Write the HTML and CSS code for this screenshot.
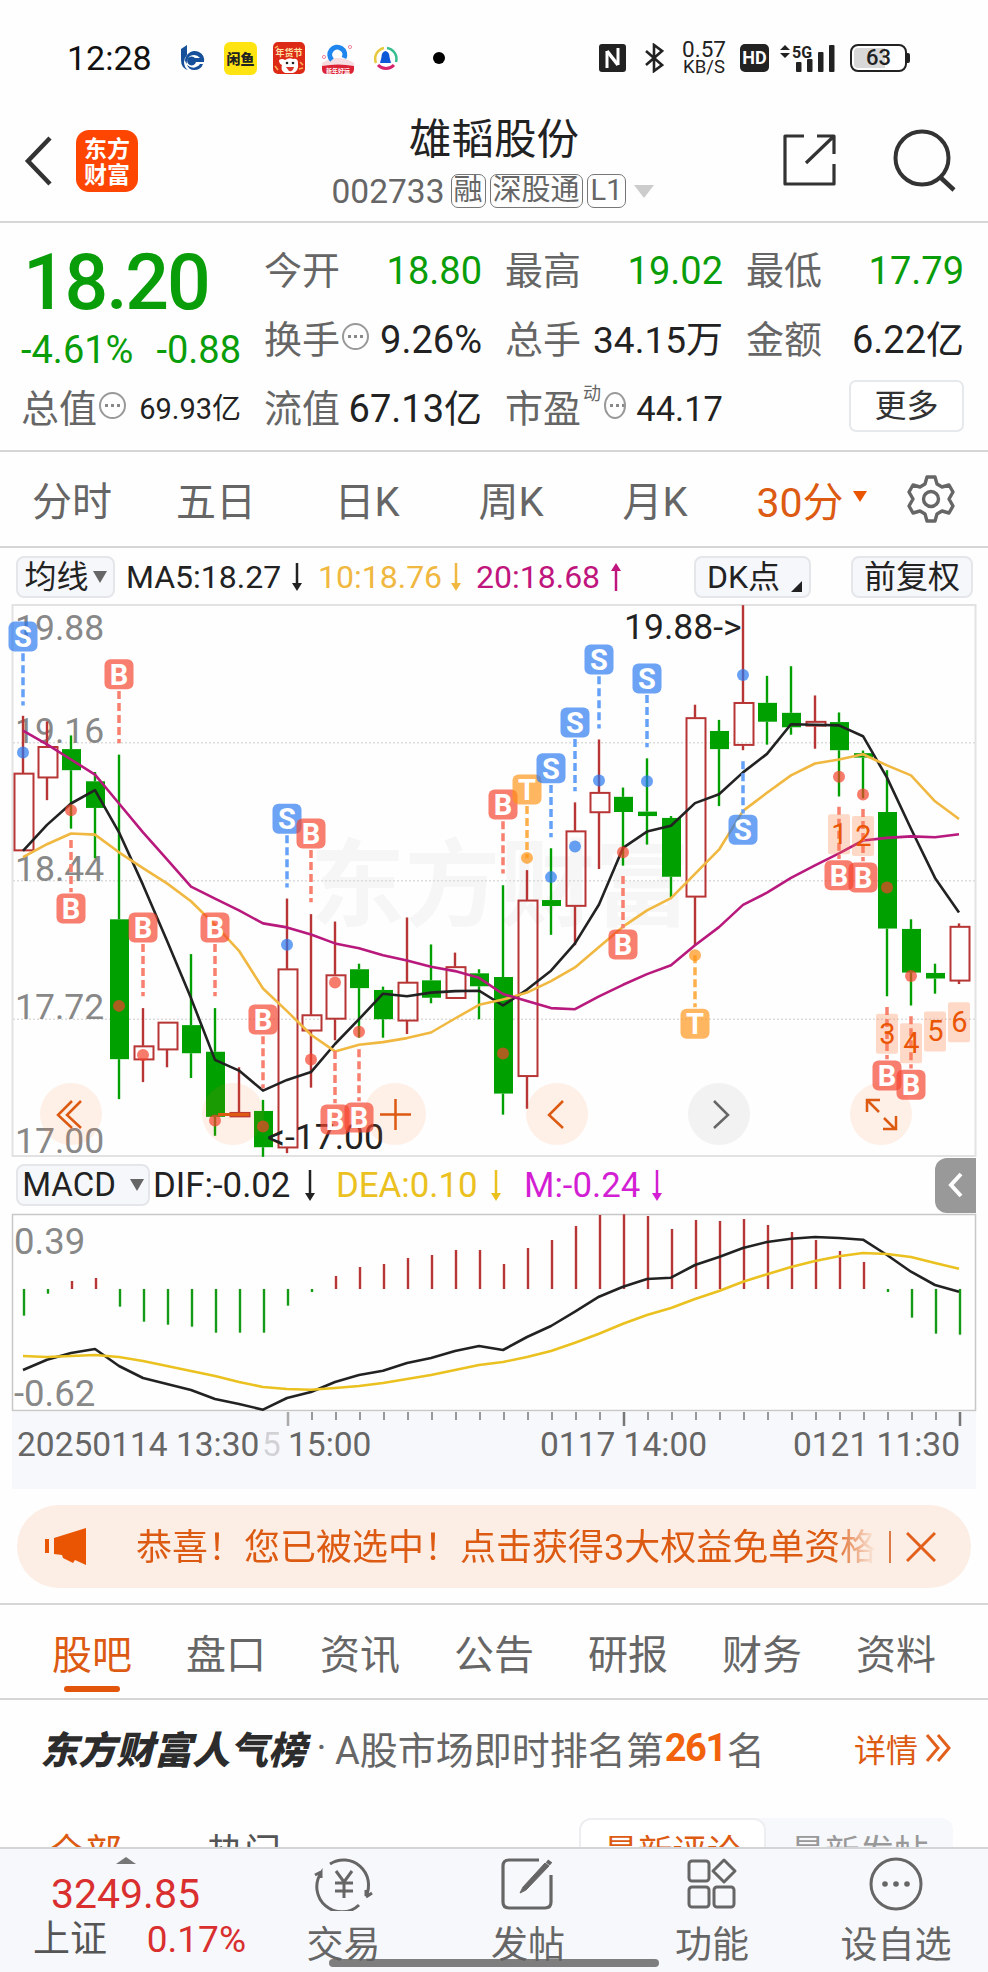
FILE: index.html
```html
<!DOCTYPE html>
<html lang="zh-CN">
<head>
  <meta charset="UTF-8">
  <meta name="viewport" content="width=device-width, initial-scale=1.0">
  <title>雄韬股份 002733</title>
  <link rel="stylesheet" href="styles.css">
</head>
<body>
  <!-- 状态栏 -->
  <div class="status-bar">
    <span class="clock">12:28</span>
    <div class="notify">
      <svg width="32" height="32" viewBox="0 0 32 32">
        <path d="M5 7 L11 3 V13 Q8 16 8 20 Q8 25 12 28 Q5 26 5 18 Z" fill="#17509a"/>
        <path d="M11 13 Q16 7 23 10 Q29 13 28 20 H20 A4.500 4.500 0 1 1 19 16 H24 Q20 11 14 14 Q10 17 11 22 Q7 18 11 13 Z" fill="#17509a"/>
        <path d="M27 22 Q25 28 18 28 Q13 28 11 23 Q16 27 20 25 Q23 24 24 22 Z" fill="#17509a"/>
      </svg>
      <span class="app-xianyu">闲鱼</span>
      <svg width="32" height="32" viewBox="0 0 32 32">
        <rect width="32" height="32" rx="5" fill="#dd2a17"/>
        <text x="16" y="14" class="app-tiny" fill="#ffe2a8">年货节</text>
        <path d="M6 18 Q9 16 12 18 Q16 15 20 17 Q25 16 25 21 Q26 29 20 31 H12 Q7 28 9 23 Q6 22 6 18Z" fill="#fff"/>
        <circle cx="14" cy="21" r="1.3" fill="#222"/><circle cx="20" cy="21" r="1.3" fill="#222"/>
        <path d="M13 25 H21 Q20 30 16 29Z" fill="#d8362c"/>
        <path d="M2 6 L5 4 M27 20 L30 23 M26 27 L30 26 M2 24 L5 28" stroke="#ffb45a" stroke-width="1.5"/>
      </svg>
      <svg width="34" height="32" viewBox="0 0 34 32">
        <path d="M1 21 Q17 11 33 21 V27 Q33 32 28 32 H6 Q1 32 1 27Z" fill="#f6dde1"/>
        <path d="M11 18 A7.500 7.500 0 1 1 23 16" fill="none" stroke="#1f86f0" stroke-width="5"/>
        <path d="M1 24 Q17 21 33 24 V27 Q33 32 28 32 H6 Q1 32 1 27Z" fill="#dc2336"/>
        <text x="17" y="30.500" class="app-tiny app-mini" fill="#fff">新年好运</text>
        <circle cx="29" cy="5" r="1.6" fill="none" stroke="#ee86a0"/><circle cx="3" cy="15" r="1.6" fill="none" stroke="#ee86a0"/>
      </svg>
      <svg width="30" height="32" viewBox="1 0 30 32">
        <path d="M6 21 A11 11 0 0 1 14 6" fill="none" stroke="#e7c93f" stroke-width="2.500"/>
        <path d="M17 6 A11 11 0 0 1 26 20" fill="none" stroke="#35bd8f" stroke-width="2.500"/>
        <path d="M8 23 A11 11 0 0 0 24 23" fill="none" stroke="#d5236c" stroke-width="3"/>
        <path d="M15.500 9 Q19.500 10 19.500 15 L21 21 H10 L11.500 15 Q11.500 10 15.500 9Z" fill="#0b57d8"/>
      </svg>
      <i class="more-dot"></i>
    </div>
    <div class="system">
      <svg class="nfc" width="27" height="28" viewBox="0 0 27 28">
        <rect width="27" height="28" rx="3" fill="#222"/>
        <path d="M8 24 V7 M19 4 V21" fill="none" stroke="#fff" stroke-width="3"/>
        <path d="M8 7 L19 21" stroke="#fff" stroke-width="3.500"/>
      </svg>
      <svg class="bt" width="20" height="30" viewBox="0 0 20 30">
        <path d="M2 8 L18 22 L10 28 V2 L18 8 L2 22" fill="none" stroke="#222" stroke-width="2.6"/>
      </svg>
      <span class="speed"><b>0.57</b><b>KB/S</b></span>
      <span class="hd">HD</span>
      <svg class="signal" width="56" height="32" viewBox="0 0 56 32">
        <path d="M0 8 L5 3 L10 8Z M0 11 L5 16 L10 11Z" fill="#222"/>
        <text x="12" y="15.500" class="signal-text">5G</text>
        <g fill="#222"><rect x="16" y="20" width="5.500" height="10" rx="1"/><rect x="27" y="17" width="5.500" height="13" rx="1"/><rect x="38" y="10" width="5.500" height="20" rx="1"/><rect x="49" y="3" width="5.500" height="27" rx="1"/></g>
      </svg>
      <span class="battery">63</span><i class="battery-tip"></i>
    </div>
  </div>

  <!-- 标题栏 -->
  <header class="header">
    <svg class="back" width="30" height="54" viewBox="0 0 30 54"><path d="M26 4 L4 27 L26 50" fill="none" stroke="#333" stroke-width="4.500"/></svg>
    <div class="logo">东方<br>财富</div>
    <div class="title">
      <h1>雄韬股份</h1>
      <div class="code">
        <span>002733</span><em>融</em><em>深股通</em><em class="l1">L1</em><i class="tri"></i>
      </div>
    </div>
    <svg class="share" width="54" height="54" viewBox="0 0 54 54">
      <path d="M21 3 H2 V51 H51 V31 M34 3 H51 V21 M50 4 L23 30" fill="none" stroke="#333" stroke-width="3.200" stroke-linejoin="round"/>
    </svg>
    <svg class="search" width="64" height="64" viewBox="0 0 64 64">
      <circle cx="29" cy="29" r="26.500" fill="none" stroke="#333" stroke-width="4"/>
      <path d="M47 48 L61 61" stroke="#333" stroke-width="4.500"/>
    </svg>
  </header>

  <!-- 行情 -->
  <section class="quote">
    <div class="cell price green">18.20</div>
    <div class="cell"><span>今开</span><b class="green">18.80</b></div>
    <div class="cell"><span>最高</span><b class="green">19.02</b></div>
    <div class="cell"><span>最低</span><b class="green">17.79</b></div>
    <div class="cell change green"><b>-4.61%</b><b>-0.88</b></div>
    <div class="cell"><span>换手</span><i class="tip"></i><b>9.26%</b></div>
    <div class="cell"><span>总手</span><b class="s37">34.15万</b></div>
    <div class="cell"><span>金额</span><b>6.22亿</b></div>
    <div class="cell"><span>总值</span><i class="tip"></i><b class="s29">69.93亿</b></div>
    <div class="cell"><span>流值</span><b>67.13亿</b></div>
    <div class="cell"><span>市盈</span><sup>动</sup><i class="tip"></i><b class="pe">44.17</b></div>
    <div class="cell"><button class="more">更多</button></div>
  </section>

  <nav class="periods">
    <span>分时</span><span>五日</span><span>日K</span><span>周K</span><span>月K</span>
    <span class="on">30分<i></i></span>
    <svg width="50" height="50" viewBox="0 0 50 50" fill="none" stroke="#666" stroke-width="3.400" stroke-linejoin="round">
      <path d="M21 3 H29 L31 10 L36 13 L43 11 L47 18 L43 25 L47 32 L43 39 L36 37 L31 40 L29 47 H21 L19 40 L14 37 L7 39 L3 32 L7 25 L3 18 L7 11 L14 13 L19 10Z"/>
      <circle cx="25" cy="25" r="7.500"/>
    </svg>
  </nav>

  <!-- K线图 -->
  <div class="ma-row">
    <button class="chip ma-chip">均线<i></i></button>
    <span class="c-black ma5">MA5:18.27</span>
    <svg class="arr" width="10" height="28" viewBox="0 0 10 28"><path d="M5 0 V24" stroke="#222" stroke-width="2.500"/><path d="M0 20 H10 L5 28Z" fill="#222"/></svg>
    <span class="c-yellow ma10">10:18.76</span>
    <svg class="arr" width="10" height="28" viewBox="0 0 10 28"><path d="M5 0 V24" stroke="#f0b840" stroke-width="2.500"/><path d="M0 20 H10 L5 28Z" fill="#f0b840"/></svg>
    <span class="c-pink ma20">20:18.68</span>
    <svg class="arr" width="10" height="28" viewBox="0 0 10 28"><path d="M5 4 V28" stroke="#c0157d" stroke-width="2.500"/><path d="M0 8 H10 L5 0Z" fill="#c0157d"/></svg>
    <button class="chip dk-chip">DK点<i></i></button>
    <button class="chip fq-chip">前复权</button>
  </div>
  <svg id="kline" class="chart" width="988" height="553" viewBox="0 0 988 553"></svg>

  <!-- MACD -->
  <div class="macd-row">
    <button class="chip macd-chip">MACD<i></i></button>
    <span class="c-black dif">DIF:-0.02</span>
    <svg class="arr" width="10" height="31" viewBox="0 0 10 31"><path d="M5 0 V27" stroke="#222" stroke-width="2.500"/><path d="M0 23 H10 L5 31Z" fill="#222"/></svg>
    <span class="c-gold dea">DEA:0.10</span>
    <svg class="arr" width="10" height="31" viewBox="0 0 10 31"><path d="M5 0 V27" stroke="#eac11f" stroke-width="2.500"/><path d="M0 23 H10 L5 31Z" fill="#eac11f"/></svg>
    <span class="c-violet m">M:-0.24</span>
    <svg class="arr" width="10" height="31" viewBox="0 0 10 31"><path d="M5 0 V27" stroke="#d31fd3" stroke-width="2.500"/><path d="M0 23 H10 L5 31Z" fill="#d31fd3"/></svg>
    <div class="drawer"><svg width="16" height="26" viewBox="0 0 16 26"><path d="M13 2 L3 13 L13 24" fill="none" stroke="#fff" stroke-width="4"/></svg></div>
  </div>
  <svg id="macd" class="chart" width="988" height="199" viewBox="0 0 988 199"></svg>
  <svg id="axis" class="chart" width="988" height="77" viewBox="0 0 988 77"></svg>

  <!-- 公告条 -->
  <div class="banner">
    <svg width="42" height="37" viewBox="0 0 42 37" fill="#ea5504"><path d="M0 11 H4 V25 H0Z M9 10 L41 0 V37 L30 32 L28 35 L18 30 L17 27 L9 26Z"/></svg>
    <span>恭喜！您已被选中！点击获得3大权益免单资格</span>
    <i></i>
    <svg width="30" height="30" viewBox="0 0 30 30"><path d="M1 1 L29 29 M29 1 L1 29" stroke="#e2601c" stroke-width="3"/></svg>
  </div>

  <nav class="tabs">
    <span class="on">股吧</span><span>盘口</span><span>资讯</span><span>公告</span><span>研报</span><span>财务</span><span>资料</span>
  </nav>

  <div class="rank">
    <strong>东方财富人气榜</strong><span class="sep">·</span><span>A股市场即时排名第</span><b>261</b><span>名</span>
    <a>详情</a>
    <svg width="27" height="30" viewBox="0 0 27 30"><path d="M2 2 L13 15 L2 28 M13 2 L24 15 L13 28" fill="none" stroke="#e2601c" stroke-width="3"/></svg>
  </div>

  <div class="filter">
    <span class="on">全部</span><span class="hot">热门</span>
    <div class="switch"><span class="on">最新评论</span><span>最新发帖</span></div>
  </div>

  <!-- 底部栏 -->
  <footer class="bottom">
    <div class="index">
      <i></i>
      <b>3249.85</b>
      <p><span>上证</span><b>0.17%</b></p>
    </div>
    <div class="item">
      <svg width="62" height="54" viewBox="0 0 62 54" fill="none" stroke="#666" stroke-width="3">
        <path d="M17 7 A25 25 0 0 1 53 39 L53 33 M59 36 L53 40"/>
        <path d="M46 48 A25 25 0 0 1 8 16 L8 21 M2 18 L8 15"/>
        <path d="M23 14 L31 25 L39 14 M31 25 V41 M22 26 H40 M22 34 H40"/>
      </svg>
      <span>交易</span>
    </div>
    <div class="item">
      <svg width="54" height="54" viewBox="0 0 54 54" fill="none" stroke="#666" stroke-width="3.200">
        <path d="M38 3 H8 Q2 3 2 9 V45 Q2 51 8 51 H44 Q50 51 50 45 V18"/>
        <path d="M22 30 L44 6 L48 9 L25 33 L19 36Z" fill="#666" stroke-width="1"/><path d="M46 4 L50 7" stroke-width="4"/>
      </svg>
      <span>发帖</span>
    </div>
    <div class="item">
      <svg width="54" height="54" viewBox="0 0 54 54" fill="none" stroke="#666" stroke-width="3">
        <rect x="4" y="4" width="20" height="20" rx="3"/><rect x="4" y="30" width="20" height="20" rx="3"/><rect x="29" y="30" width="20" height="20" rx="3"/>
        <path d="M39 3 L50 14 L39 25 L28 14Z" stroke-linejoin="round"/>
      </svg>
      <span>功能</span>
    </div>
    <div class="item">
      <svg width="54" height="54" viewBox="0 0 54 54">
        <circle cx="27" cy="27" r="25" fill="none" stroke="#666" stroke-width="3"/>
        <g fill="#666"><circle cx="16" cy="27" r="2.800"/><circle cx="27" cy="27" r="2.800"/><circle cx="38" cy="27" r="2.800"/></g>
      </svg>
      <span>设自选</span>
    </div>
    <div class="home-bar"></div>
  </footer>

  <script src="chart.js"></script>
</body>
</html>
```
FILE: styles.css
```css
* {
  box-sizing: border-box;
}
body {
  margin: 0;
  width: 988px;
  height: 1972px;
  overflow: hidden;
  background: #fefefe;
  font-family: Roboto, "Noto Sans CJK SC", sans-serif;
  color: #222;
  display: flex;
  flex-direction: column;
}
svg {
  display: block;
  flex: none;
}
i, em {
  font-style: normal;
}
b {
  font-weight: 400;
}
span, b {
  white-space: nowrap;
}
button {
  font-family: inherit;
  color: #222;
  padding: 0;
}
.green {
  color: #0a9d0a;
}

/* 状态栏 */
.status-bar {
  height: 92px;
  padding: 24px 0 0 67px;
  flex: none;
  display: flex;
  align-items: center;
}
.clock {
  font-size: 34px;
  width: 109px;
  color: #111;
}
.notify {
  display: flex;
  align-items: center;
  gap: 16px;
}
.app-xianyu {
  width: 33px;
  height: 33px;
  border-radius: 6px;
  background: #ffe412;
  color: #222;
  font: 900 14px/32px "Noto Sans CJK SC", sans-serif;
  text-align: center;
}
.app-tiny {
  font: 700 9px "Noto Sans CJK SC", sans-serif;
  text-anchor: middle;
}
.app-mini {
  font-size: 6px;
}
.more-dot {
  width: 12px;
  height: 12px;
  border-radius: 50%;
  background: #000;
  margin-left: 16px;
}
.system {
  display: flex;
  align-items: center;
  margin-left: auto;
  padding-right: 78px;
}
.bt {
  margin-left: 18px;
}
.speed {
  width: 52px;
  margin-left: 14px;
  display: flex;
  flex-direction: column;
  align-items: center;
}
.speed b {
  font-size: 22.500px;
  line-height: 18px;
}
.speed b:last-child {
  font-size: 18.500px;
}
.hd {
  width: 29px;
  height: 28px;
  margin-left: 10px;
  border-radius: 5px;
  background: #222;
  color: #fff;
  font: 700 18px/28px Roboto, sans-serif;
  text-align: center;
}
.signal {
  margin-left: 11px;
}
.signal-text {
  font: 700 16px Roboto, sans-serif;
  fill: #222;
}
.battery {
  width: 57px;
  height: 28px;
  margin-left: 14px;
  border: 2.500px solid #222;
  border-radius: 8px;
  background: linear-gradient(90deg, #d8d8d8 62%, #fff 62%);
  box-shadow: inset 0 0 0 2px #fff;
  font: 500 22px/24px Roboto, sans-serif;
  text-align: center;
}
.battery-tip {
  width: 3px;
  height: 10px;
  border-radius: 0 2px 2px 0;
  background: #222;
}

/* 标题栏 */
.header {
  height: 131px;
  flex: none;
  border-bottom: 2px solid #d6d6d6;
  display: flex;
  align-items: flex-start;
}
.back {
  margin: 42px 0 0 24px;
}
.logo {
  width: 62px;
  height: 62px;
  margin: 38px 0 0 22px;
  border-radius: 13px;
  background: #fe4502;
  color: #fff;
  font: 700 23px/26px "Noto Sans CJK SC", sans-serif;
  text-align: center;
  padding-top: 4px;
}
.title {
  width: 352px;
  margin: 20px 0 0 179px;
  display: flex;
  flex-direction: column;
  align-items: center;
}
.title h1 {
  margin: 0 0 0 2px;
  font-size: 42.500px;
  line-height: 56px;
  font-weight: 400;
  color: #222;
}
.code {
  display: flex;
  align-items: center;
  height: 50px;
  margin-top: -2px;
  font-size: 33.500px;
  color: #666;
}
.code span {
  margin-right: 6px;
}
.code em {
  height: 34px;
  border: 1.500px solid #777;
  border-radius: 7px;
  font-size: 29px;
  line-height: 30px;
  padding: 0 2px;
  margin-right: 4px;
}
.code .l1 {
  padding: 0 3px;
  margin-right: 8px;
}
.tri {
  border: 10px solid transparent;
  border-top: 13px solid #ccc;
  border-bottom: 0;
}
.share {
  margin: 41px 0 0 114px;
}
.search {
  margin: 37px 0 0 56px;
}

/* 行情 */
.quote {
  flex: none;
  height: 229px;
  padding: 14px 0 0 21px;
  display: grid;
  grid-template-columns: 220px 218px 218px 218px;
  grid-template-rows: 69px 69px 69px;
  column-gap: 23px;
  border-bottom: 2px solid #d6d6d6;
}
.cell {
  display: flex;
  align-items: center;
  font-size: 38px;
  line-height: 69px;
  white-space: nowrap;
}
.cell span {
  color: #666;
}
.cell b {
  margin-left: auto;
}
.cell .s37 {
  font-size: 37px;
}
.cell .s29 {
  font-size: 29px;
}
.cell .pe {
  font-size: 34.500px;
  margin-left: 10px;
}
.cell.price {
  font-size: 77px;
  font-weight: 500;
  letter-spacing: -2.200px;
  padding: 23px 0 0 2px;
}
.cell.change {
  padding-top: 19px;
}
.change b:first-child {
  margin-left: 0;
}
.cell sup {
  font-size: 18px;
  line-height: 20px;
  color: #666;
  margin: -32px 0 0 2px;
}
.tip {
  width: 27px;
  height: 27px;
  margin: -8px 0 0 2px;
  border: 2px solid #999;
  border-radius: 50%;
  background:
    radial-gradient(circle at 5.500px 11.500px, #888 1.500px, transparent 2px),
    radial-gradient(circle at 11.500px 11.500px, #888 1.500px, transparent 2px),
    radial-gradient(circle at 17.500px 11.500px, #888 1.500px, transparent 2px);
}
.cell sup + .tip {
  margin-left: 3px;
}
.more {
  width: 115px;
  height: 52px;
  margin: -7px 0 0 auto;
  border: 2px solid #e6e9eb;
  border-radius: 7px;
  background: #fff;
  font-size: 32px;
  line-height: 46px;
  color: #333;
}

/* 周期 */
.periods {
  flex: none;
  height: 96px;
  border-bottom: 2px solid #d6d6d6;
  display: grid;
  grid-template-columns: 144px 144px 158px 130px 158px 152px 90px;
  align-items: center;
  justify-items: center;
  font-size: 40px;
  color: #666;
}
.periods .on {
  color: #dc5a12;
  display: flex;
  align-items: center;
  font-size: 41px;
  margin-left: 3px;
}
.periods .on i {
  margin: -6px 0 0 9px;
  border: 7px solid transparent;
  border-top: 11px solid #ea5504;
  border-bottom: 0;
}

/* 指标行 */
.ma-row {
  flex: none;
  height: 56px;
  padding: 1px 0 0 16px;
  display: flex;
  align-items: center;
  font-size: 32px;
}
.chip {
  flex: none;
  height: 42px;
  border: 2px solid #e4e6e9;
  border-radius: 8px;
  background: #f5f7fa;
  font-size: 32px;
  line-height: 38px;
  display: flex;
  align-items: center;
  justify-content: center;
  white-space: nowrap;
}
.ma-chip {
  width: 99px;
}
.ma-chip i, .macd-chip i {
  border: 7px solid transparent;
  border-top: 12px solid #666;
  border-bottom: 0;
  margin-left: 4px;
}
.dk-chip {
  width: 117px;
  margin-left: 73px;
}
.dk-chip i {
  border-left: 11px solid transparent;
  border-bottom: 11px solid #222;
  margin: 20px -4px 0 11px;
}
.fq-chip {
  width: 122px;
  margin-left: 40px;
}
.ma5 {
  width: 155px;
  margin: 0 11px;
}
.ma10, .ma20 {
  width: 123px;
  margin: 0 10px 0 16px;
}
.ma20 {
  margin-left: 15px;
  margin-right: 12px;
}
.c-black { color: #222; }
.c-yellow { color: #f0b840; }
.c-pink { color: #c0157d; }
.c-gold { color: #eac11f; }
.c-violet { color: #d31fd3; }

/* 图表 */
.chart {
  overflow: visible;
}
.axis-label {
  font-size: 35.500px;
  fill: #888;
}
.macd-label {
  font-size: 36.500px;
  fill: #888;
}
.mark-label {
  font-size: 35.500px;
  fill: #222;
}
.time-label {
  font-size: 33.500px;
  fill: #666;
}
.watermark {
  font: 700 95px "Noto Sans CJK SC", sans-serif;
  fill: #f6f6f6;
}
.badge {
  font: 700 29px Roboto, sans-serif;
  fill: #fff;
  text-anchor: middle;
}
.count {
  font-size: 29px;
  fill: #ea5504;
  text-anchor: middle;
}

.macd-row {
  flex: none;
  height: 56px;
  padding: 0 12px 0 16px;
  display: flex;
  align-items: center;
  font-size: 34.800px;
}
.macd-chip {
  width: 134px;
  font-size: 33px;
}
.macd-chip i {
  margin-left: 14px;
}
.dif {
  width: 144px;
  margin: 0 8px 0 3px;
}
.dea {
  width: 143px;
  margin: 0 12px 0 21px;
}
.m {
  width: 118px;
  margin: 0 10px 0 23px;
}
.drawer {
  width: 41px;
  height: 55px;
  margin-left: auto;
  border-radius: 12px 0 0 12px;
  background: #999;
  display: flex;
  align-items: center;
  justify-content: center;
}

/* 公告条 */
.banner {
  flex: none;
  width: 954px;
  height: 83px;
  margin: 16px 0 0 17px;
  padding-left: 28px;
  border-radius: 42px;
  background: #fceee5;
  display: flex;
  align-items: center;
}
.banner span {
  width: 740px;
  margin: -5px 0 0 49px;
  overflow: hidden;
  font-size: 36px;
  color: #dc5a12;
  -webkit-mask-image: linear-gradient(90deg, #000 94%, transparent 100%);
  mask-image: linear-gradient(90deg, #000 94%, transparent 100%);
}
.banner i {
  width: 2px;
  height: 32px;
  margin: 0 15px 0 13px;
  background: #dc7a46;
}

/* 频道 */
.tabs {
  flex: none;
  height: 97px;
  margin-top: 15px;
  padding: 0 0 0 52px;
  border-top: 2px solid #d6d6d6;
  border-bottom: 2px solid #d6d6d6;
  display: flex;
  gap: 54px;
  font-size: 40px;
  line-height: 101px;
  color: #666;
}
.tabs .on {
  color: #dc5a12;
  display: flex;
  flex-direction: column;
  align-items: center;
}
.tabs .on::after {
  content: "";
  width: 56px;
  height: 6px;
  margin-top: -20px;
  border-radius: 3px;
  background: #e2560c;
}
.rank {
  flex: none;
  height: 104px;
  padding: 0 0 9px 40px;
  display: flex;
  align-items: center;
  font-size: 38px;
  color: #666;
}
.rank strong {
  width: 268px;
  color: #2c2c2c;
  font-weight: 900;
  font-style: italic;
  white-space: nowrap;
}
.rank .sep {
  width: 27px;
  text-align: center;
}
.rank b {
  font-weight: 700;
  color: #f2620c;
  margin: 0 1px 0 1px;
  letter-spacing: -1.500px;
}
.rank a {
  margin-left: auto;
  font-size: 32px;
  color: #dc5a12;
  margin-right: 7px;
}
.rank svg {
  margin-right: 36px;
}

.filter {
  flex: none;
  height: 43px;
  padding-top: 14px;
  display: flex;
  overflow: hidden;
  font-size: 37px;
  line-height: 72px;
  color: #555;
}
.filter > span {
  margin-left: 48px;
}
.filter .hot {
  margin-left: 85px;
}
.filter .on {
  color: #dc5a12;
}
.switch {
  width: 374px;
  height: 60px;
  margin-left: auto;
  margin-right: 35px;
  border-radius: 12px;
  background: #f7f8fb;
  display: flex;
  font-size: 34.500px;
  line-height: 64px;
  color: #999;
}
.switch span {
  width: 187px;
  padding-top: 2px;
  text-align: center;
}
.switch .on {
  border: 2px solid #eceef0;
  border-radius: 12px;
  background: #fff;
  padding-top: 0;
}

/* 底部栏 */
.bottom {
  flex: none;
  height: 126px;
  border-top: 2px solid #d4d5d7;
  background: #f7f8fb;
  display: grid;
  grid-template-columns: 251px 185px 184px 184px 184px;
  position: relative;
}
.index {
  display: flex;
  flex-direction: column;
  align-items: center;
}
.index > i {
  margin-top: 8px;
  border: 10px solid transparent;
  border-bottom: 7px solid #777;
  border-top: 0;
}
.index b {
  color: #d92f2f;
  font-size: 41px;
  line-height: 60px;
}
.index p {
  margin: -6px 0 0 28px;
  width: 213px;
  display: flex;
  align-items: center;
  justify-content: space-between;
  font-size: 37px;
  line-height: 44px;
  color: #555;
}
.index p b {
  font-size: 37px;
  line-height: 44px;
}
.item {
  display: flex;
  flex-direction: column;
  align-items: center;
  padding-top: 8px;
  font-size: 37px;
  line-height: 56px;
  color: #666;
}
.item span {
  margin-top: 7px;
}
.home-bar {
  position: absolute;
  left: 329px;
  bottom: 6px;
  width: 330px;
  height: 8px;
  border-radius: 4px;
  background: rgba(95, 95, 95, 0.8);
}
```
FILE: chart.js
```js
const RED = '#b73535';
const GREEN = '#00a000';
const BLUE = '#65a1f8';
const PINK = '#f8806f';
const ORANGE = '#ffb04c';

const X = (i) => 23 + 24 * i;
const Y = (v) => v * 0.37 - 14;   // K线刻度
const M = (v) => v / 3 - 63;      // MACD刻度

// [涨跌, 实体上, 实体下, 最高, 最低]
const candles = [
  ['r', 495, 705, 340, 705], ['r', 423, 508, 355, 568], ['g', 430, 487, 393, 645], ['g', 517, 589, 492, 725],
  ['g', 890, 1268, 445, 1376], ['r', 1232, 1270, 1130, 1330], ['r', 1168, 1243, 1168, 1290], ['g', 1176, 1252, 984, 1319],
  ['g', 1248, 1424, 1130, 1475], ['r', 1412, 1424, 1290, 1424], ['g', 1408, 1506, 1378, 1532], ['r', 1024, 1508, 834, 1522],
  ['r', 1148, 1192, 876, 1345], ['r', 1040, 1160, 896, 1217], ['g', 1025, 1076, 1010, 1210], ['g', 1081, 1160, 1072, 1210],
  ['r', 1060, 1165, 885, 1200], ['g', 1055, 1102, 958, 1117], ['r', 1018, 1104, 980, 1104], ['g', 1036, 1071, 1025, 1160],
  ['g', 1046, 1361, 798, 1418], ['r', 838, 1315, 757, 1402], ['g', 838, 854, 698, 932], ['r', 651, 855, 574, 960],
  ['r', 547, 602, 404, 754], ['g', 559, 600, 534, 745], ['g', 599, 611, 455, 688], ['g', 616, 775, 611, 830],
  ['r', 345, 830, 310, 960], ['g', 381, 430, 351, 584], ['r', 304, 420, 41, 433], ['g', 305, 356, 232, 418],
  ['g', 332, 371, 206, 391], ['r', 355, 368, 285, 429], ['g', 357, 433, 331, 558], ['g', 441, 453, 434, 563],
  ['g', 600, 915, 487, 1098], ['g', 916, 1034, 890, 1123], ['g', 1035, 1050, 1010, 1091], ['r', 909, 1057, 901, 1065]
];

const ma5 = [705, 635, 577, 541, 655, 797, 948, 1103, 1270, 1299, 1353, 1324, 1303, 1227, 1160, 1091, 1098, 1088, 1084, 1083,
  1123, 1080, 1029, 955, 850, 697, 653, 637, 576, 552, 493, 443, 363, 364, 366, 395, 507, 645, 778, 872];
const ma10 = [722, 687, 658, 661, 709, 752, 793, 841, 905, 975, 1077, 1138, 1202, 1247, 1229, 1222, 1211, 1196, 1158, 1121,
  1107, 1088, 1057, 1020, 965, 910, 866, 833, 767, 702, 597, 548, 501, 469, 458, 444, 474, 501, 571, 619];
const ma20 = [380, 417, 458, 499, 577, 655, 728, 802, 834, 866, 901, 912, 931, 955, 968, 987, 1001, 1018, 1030, 1048,
  1092, 1111, 1130, 1133, 1098, 1067, 1038, 1014, 960, 911, 851, 818, 778, 744, 712, 677, 670, 666, 668, 660];

// [序号, 类型, 标签位置, 圆点位置, 方向 1=上 -1=下]
const marks = [
  [0, 'S', 126, 439, 1], [2, 'B', 861, 595, -1], [4, 'B', 228, 1124, 1], [5, 'B', 912, 1257, 1], [8, 'B', 912, 1434, 1],
  [10, 'B', 1161, 1450, 1], [11, 'S', 618, 959, 1], [12, 'B', 658, 1269, 1], [13, 'B', 1431, 1061, -1], [14, 'B', 1426, 1194, -1],
  [20, 'B', 580, 1253, 1], [21, 'T', 539, 724, 1], [22, 'S', 482, 776, 1], [23, 'S', 358, 693, 1], [24, 'S', 188, 515, 1],
  [25, 'B', 958, 709, -1], [26, 'S', 239, 517, 1], [28, 'T', 1172, 987, -1], [30, 'S', 648, 230, -1],
  [34, 'B', 771, 505, -1], [35, 'B', 777, 553, -1], [36, 'B', 1312, 804, -1], [37, 'B', 1337, 1043, -1]
];
const counts = [[34, 660], [35, 665], [36, 1199], [37, 1225], [38, 1193], [39, 1168]];

const bars = [497, 431, 393, 384, 470, 515, 524, 530, 548, 548, 548, 467, 426, 378, 351, 342, 324, 315, 300, 300,
  342, 294, 270, 228, 195, 193, 198, 237, 210, 213, 207, 225, 246, 270, 303, 336, 426, 503, 551, 554];
const dif = [660, 629, 609, 597, 648, 684, 702, 720, 747, 762, 779, 744, 726, 696, 675, 662, 639, 624, 603, 588,
  600, 561, 528, 485, 440, 410, 387, 383, 345, 321, 294, 276, 266, 261, 264, 269, 315, 365, 405, 425];
const dea = [618, 621, 618, 615, 621, 633, 648, 663, 678, 696, 711, 717, 719, 714, 708, 699, 687, 675, 660, 645,
  636, 621, 603, 578, 551, 521, 495, 474, 447, 423, 395, 373, 351, 333, 319, 309, 312, 321, 339, 356];

const line = (x1, y1, x2, y2, color, w, extra = '') =>
  `<line x1="${x1}" y1="${y1}" x2="${x2}" y2="${y2}" stroke="${color}" stroke-width="${w}" ${extra}/>`;
const poly = (data, scale, color) =>
  `<polyline points="${data.map((v, i) => X(i) + ',' + scale(v).toFixed(1)).join(' ')}" fill="none" stroke="${color}" stroke-width="2.6" stroke-linejoin="round"/>`;

function drawKline() {
  let s = '<text x="310" y="315" class="watermark">东方财富</text>';
  [413, 786, 1160].forEach((v) => { s += line(13, Y(v), 975, Y(v), '#dcdcdc', 1.5, 'stroke-dasharray="2 2"'); });
  s += '<rect x="12.500" y="1" width="963" height="551" fill="none" stroke="#e2e2e2" stroke-width="2"/>';

  [['19.88', 135], ['19.16', 413], ['18.44', 786], ['17.72', 1160], ['17.00', 1522]].forEach(([t, v]) => {
    s += `<text x="15" y="${Y(v)}" class="axis-label">${t}</text>`;
  });

  candles.forEach(([c, top, bottom, high, low], i) => {
    const x = X(i);
    const color = c === 'r' ? RED : GREEN;
    s += line(x, Y(high), x, Y(top), color, 2.4) + line(x, Y(bottom), x, Y(low), color, 2.4);
    if (c === 'g') {
      s += `<rect x="${x - 9}" y="${Y(top)}" width="19" height="${Y(bottom) - Y(top)}" fill="${GREEN}"/>`;
    } else {
      s += `<rect x="${x - 8.5}" y="${Y(top) + 0.5}" width="19" height="${Math.max(Y(bottom) - Y(top) - 1, 2)}" fill="none" stroke="${RED}" stroke-width="2"/>`;
    }
  });
  s += '<text x="624" y="35" class="mark-label">19.88-&gt;</text>';
  s += '<text x="267" y="545" class="mark-label">&lt;-17.00</text>';
  s += poly(ma5, Y, '#222') + poly(ma10, Y, '#f0b840') + poly(ma20, Y, '#b8197c');

  // 悬浮按钮
  [71, 233, 395, 557, 719, 881].forEach((x) => {
    s += `<circle cx="${x}" cy="510" r="31" fill="${x === 719 ? '#888' : '#ff6a1e'}" fill-opacity="0.1"/>`;
  });
  s += `<g fill="none" stroke="#dc5a12" stroke-width="2.500">
    <path d="M72 497 L58 511 L72 524 M81 497 L67 511 L81 524"/>
    <path d="M218 510.500 H249" stroke-width="3"/>
    <path d="M380 510.500 H411 M395.500 495 V526"/>
    <path d="M563 497 L549 511 L563 524"/>
    <path d="M714 497 L728 511 L714 524" stroke="#666"/>
    <path d="M867 508 V496 H880 M868 497 L879 508 M884 514 L895 525 M896 512 V525 H883"/>
  </g>`;

  marks.forEach(([i, type, v, dot, dir]) => {
    const x = X(i);
    const color = { S: BLUE, B: PINK, T: ORANGE }[type];
    const dotColor = { S: '#2878f0', B: '#f4432c', T: '#ff9416' }[type];
    const start = dir > 0 ? v + 45 : v - 185;
    s += line(x, Y(start), x, Y(start + 141), color, 3.5, 'stroke-dasharray="8 4"');
    s += `<circle cx="${x}" cy="${Y(dot)}" r="6" fill="${dotColor}" fill-opacity="0.7"/>`;
    s += `<rect x="${x - 14.5}" y="${Y(v) - 15}" width="29" height="30" rx="6" fill="${dotColor}" fill-opacity="0.68"/>`;
    s += `<text x="${x}" y="${Y(v) + 10.5}" class="badge">${type}</text>`;
  });
  counts.forEach(([i, v], n) => {
    s += `<rect x="${X(i) - 11}" y="${Y(v) - 20}" width="22" height="40" rx="2" fill="#ff7a3c" fill-opacity="0.28"/>`;
    s += `<text x="${X(i) + 0.5}" y="${Y(v) + 10}" class="count">${n + 1}</text>`;
  });
  document.getElementById('kline').innerHTML = s;
}

function drawMacd() {
  let s = '<rect x="12.500" y="1.500" width="963" height="196" fill="none" stroke="#c8c8c8" stroke-width="1.500"/>';
  s += '<text x="14" y="41" class="macd-label">0.39</text><text x="14" y="192.500" class="macd-label">-0.62</text>';
  bars.forEach((v, i) => { s += line(X(i) + 1, M(417), X(i) + 1, M(v), v < 417 ? RED : '#149a14', 2.4); });
  s += poly(dif, M, '#222') + poly(dea, M, '#eac11f');
  document.getElementById('macd').innerHTML = s;
}

function drawAxis() {
  let s = '<rect x="12" y="0" width="964" height="77" fill="#f7f8fb"/>';
  for (let i = 11; i < 40; i++) {
    const major = i === 11 || i === 25 || i === 39;
    s += line(X(i) + 1, 0, X(i) + 1, major ? 14 : 8, i === 11 ? '#aaa' : '#777', major ? 2.5 : 1.5);
  }
  s += '<text x="17" y="44" class="time-label">20250114 13:30</text>';
  s += '<text x="262" y="44" class="time-label" opacity="0.25">5</text>';
  s += '<text x="288" y="44" class="time-label">15:00</text>';
  s += '<text x="540" y="44" class="time-label">0117 14:00</text>';
  s += '<text x="960" y="44" class="time-label" text-anchor="end">0121 11:30</text>';
  document.getElementById('axis').innerHTML = s;
}

drawKline();
drawMacd();
drawAxis();
```
